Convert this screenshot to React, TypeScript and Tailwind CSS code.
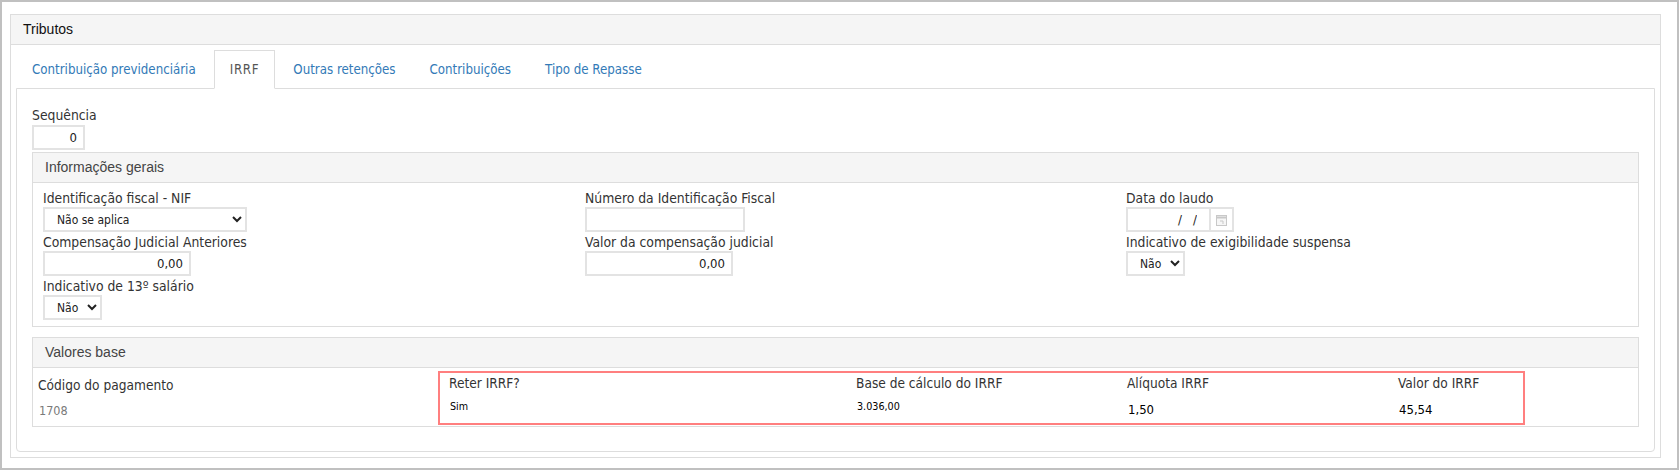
import React from "react";

const label = "block h-[19px] text-[13.8px] leading-[20px] text-[#333] font-['DejaVu_Sans_Condensed','DejaVu_Sans',sans-serif]";
const control = "block h-[25px] border-2 border-[#e3e3e3] bg-white text-[12px] text-[#222] font-['DejaVu_Sans_Condensed','DejaVu_Sans',sans-serif]";
const panelTitle = "flex h-[30px] items-center border-b border-[#ddd] bg-[#f5f5f5] px-[12px] text-[14px] text-[#444] font-['Liberation_Sans',sans-serif]";

function Field({ title, children }: { title: string; children: React.ReactNode }) {
  return (
    <div className="h-[44px]">
      <label className={label}>{title}</label>
      {children}
    </div>
  );
}

function NumberInput({ width, value }: { width: string; value: string }) {
  return <input readOnly value={value} className={`${control} ${width} px-[6px] text-right text-[13px] outline-none`} />;
}

function YesNo({ width, text }: { width: string; text: string }) {
  return (
    <select defaultValue={text} className={`${control} ${width} pl-[8px] outline-none`}>
      <option>{text}</option>
    </select>
  );
}

function CalendarIcon() {
  return (
    <svg width="11" height="11" viewBox="0 0 11 11" className="mt-[2px] text-[#c8c8c8]" aria-hidden>
      <rect x="0.5" y="0.5" width="10" height="10" fill="#f6f6f6" stroke="currentColor" />
      <path d="M0.5 2.5h10" stroke="currentColor" strokeWidth="2" />
      <path d="M4 6h3v3" stroke="currentColor" fill="none" />
    </svg>
  );
}

export default function App() {
  const tabs = ["Contribuição previdenciária", "IRRF", "Outras retenções", "Contribuições", "Tipo de Repasse"];
  const base = [
    { title: "Reter IRRF?", value: "Sim", small: true },
    { title: "Base de cálculo do IRRF", value: "3.036,00", small: true },
    { title: "Alíquota IRRF", value: "1,50", small: false },
    { title: "Valor do IRRF", value: "45,54", small: false },
  ];

  return (
    <div className="h-[470px] w-[1679px] border-2 border-[#c0c0c0] bg-white pt-[12px] pr-[16px] pl-[8px]">
      {/* Tributos */}
      <div className="h-[444px] border border-[#ddd]">
        <div className="flex h-[30px] items-center border-b border-[#ddd] bg-[#f5f5f5] px-[12px] text-[14px] text-[#111] font-['Liberation_Sans',sans-serif]">
          Tributos
        </div>
        <div className="px-[5px] pt-[5px]">
          <ul className="relative z-10 flex h-[38px] pl-0 font-['DejaVu_Sans_Condensed','DejaVu_Sans',sans-serif] text-[13.2px]">
            {tabs.map((tab) => (
              <li
                key={tab}
                className={`mr-[2px] flex h-[39px] items-center border px-[15px] ${
                  tab === "IRRF"
                    ? "border-[#ddd] border-b-white bg-white tracking-[0.7px] text-[#555]"
                    : "border-transparent text-[#337ab7]"
                }`}
              >
                {tab}
              </li>
            ))}
          </ul>

          <div className="h-[364px] rounded-b-[4px] border border-[#ddd] px-[15px] pt-[16px]">
            <label className={`${label} mb-[1px]`}>Sequência</label>
            <NumberInput width="w-[53px]" value="0" />

            {/* Informações gerais */}
            <div className="mt-[2px] h-[175px] border border-[#ddd]">
              <div className={panelTitle}>Informações gerais</div>
              <div className="grid grid-cols-[542px_541px_1fr] pt-[5px] pl-[10px]">
                <div>
                  <Field title="Identificação fiscal - NIF">
                    <select defaultValue="Não se aplica" className={`${control} w-[204px] pl-[8px] outline-none`}>
                      <option>Não se aplica</option>
                    </select>
                  </Field>
                  <Field title="Compensação Judicial Anteriores">
                    <NumberInput width="w-[148px]" value="0,00" />
                  </Field>
                  <Field title="Indicativo de 13º salário">
                    <YesNo width="w-[59px]" text="Não" />
                  </Field>
                </div>
                <div>
                  <Field title="Número da Identificação Fiscal">
                    <input readOnly className={`${control} w-[160px] outline-none`} />
                  </Field>
                  <Field title="Valor da compensação judicial">
                    <NumberInput width="w-[148px]" value="0,00" />
                  </Field>
                </div>
                <div>
                  <Field title="Data do laudo">
                    <div className="flex w-[108px]">
                      <input readOnly value="/   /" className={`${control} w-[85px] pr-[12px] text-right text-[13px] outline-none`} />
                      <span className="-ml-[2px] flex h-[25px] w-[25px] items-center justify-center border-2 border-[#e3e3e3]">
                        <CalendarIcon />
                      </span>
                    </div>
                  </Field>
                  <Field title="Indicativo de exigibilidade suspensa">
                    <YesNo width="w-[59px]" text="Não" />
                  </Field>
                </div>
              </div>
            </div>

            {/* Valores base */}
            <div className="mt-[10px] h-[90px] border border-[#ddd]">
              <div className={panelTitle}>Valores base</div>
              <div className="flex font-['DejaVu_Sans_Condensed','DejaVu_Sans',sans-serif]">
                <div className="w-[405px] pt-[7px] pl-[5px]">
                  <div className="h-[26px] text-[13.6px] leading-[20px] text-[#333]">Código do pagamento</div>
                  <div className="pl-[1px] text-[12.5px] leading-[20px] text-[#7a7a7a]">1708</div>
                </div>
                <div className="mt-[3px] grid h-[54px] w-[1087px] grid-cols-[407px_271px_271px_1fr] border-2 border-[#ff7f7f] pl-[9px]">
                  {base.map((item) => (
                    <div key={item.title}>
                      <div className="h-[24px] text-[13.6px] leading-[20px] text-[#333]">{item.title}</div>
                      <div
                        className={
                          item.small
                            ? "pl-[1px] text-[10.7px] leading-[20px] text-black"
                            : "pt-[3px] pl-[1px] text-[13px] leading-[20px] text-black"
                        }
                      >
                        {item.value}
                      </div>
                    </div>
                  ))}
                </div>
              </div>
            </div>
          </div>
        </div>
      </div>
    </div>
  );
}
